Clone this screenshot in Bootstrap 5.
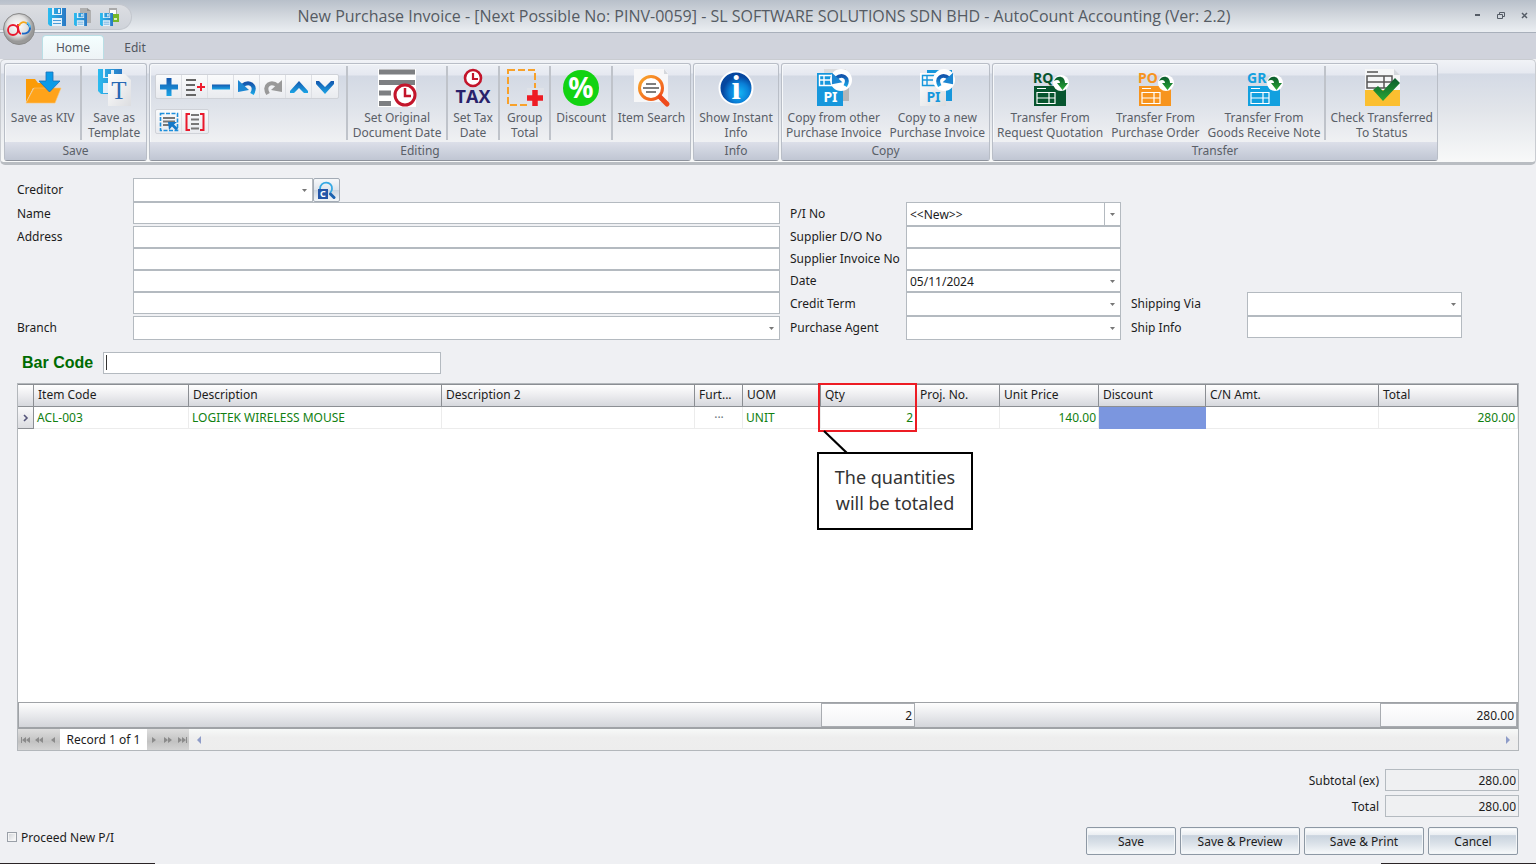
<!DOCTYPE html>
<html lang="en">
<head>
<meta charset="utf-8">
<meta name="viewport" content="width=device-width, initial-scale=1">
<title>New Purchase Invoice - AutoCount Accounting</title>
<link href="https://cdn.jsdelivr.net/npm/bootstrap@5.3.0/dist/css/bootstrap.min.css" rel="stylesheet">
<style>
  body { font-family: "Noto Sans", sans-serif; font-size: 12px; line-height: 15px; color: #1c1c1c; background: #eff0f3; }
  svg text { font-family: "Noto Sans", sans-serif; font-weight: 700; }

  /* title bar and tabs */
  .title-bar { height: 33px; background: linear-gradient(#b8c0ca, #d3d8de 50%, #ebeef2); border-bottom: 1px solid #a9b0bb; color: #555b63; }
  .title-bar h1 { font: 400 16px/20px "Open Sans", sans-serif; padding-top: 2px; }
  .orb { left: 2px; top: 12px; width: 34px; height: 34px; z-index: 3; }
  .quick-bar { width: 132px; height: 26px; background: linear-gradient(#dcdee2, #cfd3da); border: 1px solid #c3c7ce; border-left: 0; border-radius: 0 13px 13px 0; padding-left: 48px; }
  .quick-wrap, .win-buttons { flex: 1 1 0; min-width: 0; }
  .bare { background: none; border: 0; padding: 0; color: inherit; }
  .tab-strip { height: 26px; background: #d0d3dc; padding-left: 42px; color: #50565e; }
  .tab-strip a { color: #50565e; width: 62px; text-decoration: none; }
  .tab-strip a.active { background: linear-gradient(#f4ffff, #eef3f6); border: 1px solid #b9dfe6; border-bottom: 0; border-radius: 4px 4px 0 0; }

  /* ribbon */
  .ribbon { background: linear-gradient(#f1f3f7, #e6e9f0 13px, #d4dae5 14px, #e2e5ea 50%, #f8f9f9); border: 1px solid #c9ccd1; border-bottom: 3px solid #b9bdc2; border-radius: 5px; color: #5a6068; padding: 3px 3px 1px; gap: 2px; }
  .ribbon-group { border: 1px solid #b9bec7; border-bottom-color: #8e939c; border-radius: 3px; background: linear-gradient(#eef1f6, #e5e8f0 11px, #d3d9e4 12px, #dfe3ea 45%, #f0f1f3 79px); box-shadow: inset 1px 1px 0 #f6f8fa; }
  .ribbon-group .tools { height: 78px; }
  .ribbon-group h2 { font-size: 12px; line-height: 17px; height: 18px; margin: 0; text-align: center; background: linear-gradient(#dcdfe9, #c0c6d3); }
  .g-save { width: 143px; } .g-edit { width: 542px; } .g-info { width: 86px; } .g-copy { width: 209px; } .g-transfer { width: 446px; }
  .tool { flex: 1 1 auto; display: flex; flex-direction: column; align-items: center; justify-content: flex-start; padding-top: 4px; white-space: nowrap; }
  .tool svg { display: block; flex: none; width: 40px; height: 40px; margin-bottom: 2px; }
  .divided { border-left: 2px solid #bfc3ca; height: 74px; margin-top: 2px; padding-top: 2px; }
  .mini-tools { width: 196px; padding: 10px 0 0 5px; }
  .mini-group { background: linear-gradient(#fafbfc, #e9ebef); border: 1px solid #cfd2d8; border-radius: 2px; }
  .mini-group button { width: 26px; height: 23px; border-right: 1px solid #dddfe4; }
  .mini-group button:last-child { border-right: 0; }
  .mini-group svg { display: block; margin: auto; width: 20px; height: 20px; }

  /* invoice form */
  .invoice-form { padding: 13px 74px 0 17px; gap: 10px; }
  .field-row { display: flex; height: 22px; }
  .field-row.tall { height: 24px; }
  .field-row label { width: 116px; flex: none; line-height: 22px; white-space: nowrap; }
  .field-row.tall label { line-height: 24px; }
  .box { border: 1px solid #b4bac0; border-radius: 0; background-color: #fff; height: 22px; width: 100%; padding: 0 3px; min-width: 0; color: #1c1c1c; }
  .tall select.box { height: 24px; }
  select.box { appearance: none; background-image: url("data:image/svg+xml,%3Csvg xmlns='http://www.w3.org/2000/svg' width='5' height='3'%3E%3Cpath d='M0 0h5L2.500 3z' fill='%23777'/%3E%3C/svg%3E"); background-repeat: no-repeat; background-position: right 5px center; }
  select.split { background-image: url("data:image/svg+xml,%3Csvg xmlns='http://www.w3.org/2000/svg' width='5' height='3'%3E%3Cpath d='M0 0h5L2.500 3z' fill='%23777'/%3E%3C/svg%3E"), linear-gradient(#b4bac0, #b4bac0); background-position: right 5px center, right 15px top; background-size: 5px 3px, 1px 100%; }
  .side-block { width: 331px; flex: none; }
  .creditor-box { width: 180px !important; }
  .lookup { width: 27px; height: 24px; background: linear-gradient(#f6f8fa, #dfe5ec 50%, #cbd5e0 51%, #f3f6f8); border: 1px solid #a3abb5; border-radius: 2px; }
  .bar-row { padding: 12px 22px 0; }
  .bar-label { font: 700 16px/22px "Liberation Sans", sans-serif; color: #006b00; width: 81px; }
  .bar-input { width: 338px; background: linear-gradient(#333, #333) 2px 2px / 1px 15px no-repeat #fff; }

  /* item grid */
  .grid-panel { margin: 9px 17px 0; border: 1px solid #b3b7bb; background: #fff; flex: 1 1 auto; }
  .items { width: 100%; table-layout: fixed; border-collapse: separate; border-spacing: 0; }
  .items th { font-weight: 400; height: 23px; padding: 0 0 0 4px; border: solid #8b8e93; border-width: 1px 1px 1px 0; background: linear-gradient(#fff, #ececef 50%, #d6d8dd); white-space: nowrap; overflow: hidden; text-overflow: ellipsis; line-height: 20px; vertical-align: top; }
  .items tbody td { height: 22px; color: #118011; padding: 0 2px 0 3px; border-right: 1px solid #ececec; border-bottom: 1px solid #ececec; white-space: nowrap; }
  .items tbody td.row-mark { background: linear-gradient(#fafafb, #dcdde1); border-color: #8b8e93; padding: 0; }
  .items tbody td.picked { background: #7b96df; border-color: #7b96df; }
  .items.sums { border: 2px solid #9fa2a6; border-width: 1px 1px 2px; background: linear-gradient(#fdfdfd, #e9eaed 50%, #d3d5da); }
  .items.sums tbody td { height: 24px; padding: 0 2px; text-align: right; color: #1c1c1c; border: 0; }
  .items.sums tbody td.sum { border: 1px solid #a9acb1; background: linear-gradient(#fff, #f3f4f6); }
  .qty-mark { left: -3px; top: -24px; width: 99px; height: 49px; border: 2px solid #ed1c24; pointer-events: none; }
  .callout { left: -4px; top: 45px; width: 156px; height: 78px; border: 2px solid #000; background: #fff; color: #333; font-size: 18px; line-height: 26px; padding-top: 10px; text-align: center; z-index: 2; }
  .leader { left: 2px; top: 23px; width: 26px; height: 24px; }
  .record-bar { height: 21px; background: linear-gradient(#f7f9f8, #eee 40%, #ededed); }
  .nav-keys { background: linear-gradient(#dedede, #c2c2c2 60%, #d4d4d4); height: 21px; }
  .nav-keys button { width: 14px; display: flex; align-items: center; justify-content: center; }
  .record-text { width: 87px; background: #fff; height: 21px; line-height: 21px; text-align: center; }

  /* totals and commands */
  .totals { padding: 18px 17px 0; }
  .totals label { width: 92px; text-align: right; padding: 2px 6px 0 0; line-height: 20px; }
  .totals .box { width: 134px; background: #eff0f2; text-align: right; padding: 0 2px; }
  .commands { padding: 10px 18px 8px 7px; }
  .cmd { height: 28px; border: 1px solid #8d98a4; border-radius: 2px; background: linear-gradient(#fff, #e9edf1 28%, #c9d3de 29%, #dbe2e9 60%, #f8fafb); padding: 0; color: #1c1c1c; box-shadow: inset 0 0 0 1px #f2f5f7; }
  .cmd-s { width: 90px; } .cmd-l { width: 120px; }
  .proceed { padding-bottom: 8px; }
  .proceed input { appearance: none; width: 10px; height: 10px; border: 1px solid #9aa0a8; background: linear-gradient(135deg, #cfd2d6, #fff); box-shadow: inset 0 0 0 1px #f5f5f5; margin: 0 4px 0 0; }
  .edge-line i { width: 155px; height: 1px; background: #2a2426; }
</style>
</head>
<body class="min-vh-100 d-flex flex-column">

<!-- shared shapes -->
<svg class="position-absolute" width="0" height="0" aria-hidden="true">
  <defs>
    <linearGradient id="blueH"><stop offset="0" stop-color="#2bbcf0"/><stop offset="1" stop-color="#2a78c4"/></linearGradient>
    <linearGradient id="blueV" x2="0" y2="1"><stop offset="0" stop-color="#1456ad"/><stop offset="1" stop-color="#1ba5e6"/></linearGradient>
    <linearGradient id="lens" x2="1" y2="1"><stop offset="0" stop-color="#f9a72b"/><stop offset="1" stop-color="#f0501c"/></linearGradient>
    <linearGradient id="page" x2="1" y2="1"><stop offset="0" stop-color="#fff"/><stop offset="1" stop-color="#dcdde0"/></linearGradient>
    <radialGradient id="orbFill" cx=".45" cy=".4"><stop offset="0" stop-color="#fff"/><stop offset=".65" stop-color="#e0e0e0"/><stop offset="1" stop-color="#999"/></radialGradient>
    <radialGradient id="infoFill" cx=".6" cy=".65"><stop offset="0" stop-color="#13b6f5"/><stop offset=".6" stop-color="#0a80d8"/><stop offset="1" stop-color="#06479f"/></radialGradient>
    <linearGradient id="greenV" x2="0" y2="1"><stop offset="0" stop-color="#0a5a2c"/><stop offset="1" stop-color="#2aa835"/></linearGradient>
    <symbol id="disk" viewBox="0 0 18 18"><path fill="url(#blueH)" d="M0 0h18v18H2l-2-2z"/><path fill="#e4f1fa" d="M4 0h2v7H4zM13 0h1v7h-1zM4 6h10v1H4zM4 10h10v8H4z"/><path fill="#e4f1fa" d="M10 1h2v4h-2z"/><path fill="#4a9bd8" d="M5 12h8v1H5zM5 15h8v1H5z"/></symbol>
    <symbol id="transferIcon" viewBox="0 0 40 40">
      <path fill="currentColor" d="M4 18h32v20H4z"/>
      <path fill="none" stroke="#fff" stroke-width="1.200" d="M7 20.500h9M7 24.500h18v11H7zM7 30h18M19 24.500v11"/>
      <circle cx="31" cy="15" r="8" fill="#fff"/>
      <path fill="url(#greenV)" d="M24 13c2-6 11-6 11 2h3l-5.500 7-5.500-7h3c0-3-3-4-6-2z"/>
    </symbol>
    <symbol id="curlLeft" viewBox="0 0 20 20"><path fill="none" stroke="url(#blueV)" stroke-width="4" d="M5 9c7-6 15-1 10 8"/><path fill="#1c86d2" d="M1 3v12l11-2z"/></symbol>
    <symbol id="curlRight" viewBox="0 0 20 20"><path fill="none" stroke="#999" stroke-width="4" d="M15 9C8 3 0 8 5 17"/><path fill="#999" d="M19 3v12L8 13z"/></symbol>
  </defs>
</svg>

<header class="title-bar position-relative d-flex">
  <button class="bare orb position-absolute" aria-label="Application menu">
    <svg width="34" height="34" viewBox="0 0 34 34"><circle cx="17" cy="17" r="15.500" fill="url(#orbFill)" stroke="#8a8a8a"/><circle cx="11" cy="18" r="5" fill="none" stroke="#e8172c" stroke-width="1.800"/><path d="M16 12c0 5 0 9 3 10" fill="none" stroke="#e8172c" stroke-width="1.800"/><path d="M17 14c1-4 5-5 8-2.500" fill="none" stroke="#f6a81c" stroke-width="1.800"/><path d="M25 11.500c6 4 2 11-5 10" fill="none" stroke="#1b67c4" stroke-width="1.800"/><path d="M25 10.500c2 1 3 3 3 5" fill="none" stroke="#5bc3f0" stroke-width="1.600"/></svg>
  </button>
  <div class="quick-wrap">
    <div class="quick-bar d-flex align-items-center mt-1">
      <button class="bare d-flex me-2" aria-label="Save"><svg width="18" height="18"><use href="#disk"/></svg></button>
      <button class="bare d-flex me-2" aria-label="Save and new"><svg width="18" height="18" viewBox="0 0 18 18"><path fill="#b0b0b0" d="M6 0h7l4 3v12H6z"/><path fill="#939393" d="M13 0v3h4z"/><use href="#disk" y="5" width="13" height="13"/></svg></button>
      <button class="bare d-flex" aria-label="Save and print"><svg width="19" height="18" viewBox="0 0 19 18"><path fill="#aaa" d="M9 0h8v6H9z"/><path fill="#fff" d="M10 2h6v4h-6z"/><path fill="#76b82a" d="M7 6h12v8H7z"/><path fill="#d9efc0" d="M14 10h3v2h-3z"/><use href="#disk" y="5" width="13" height="13"/></svg></button>
    </div>
  </div>
  <h1 class="text-nowrap mb-0 mt-1">New Purchase Invoice - [Next Possible No: PINV-0059] - SL SOFTWARE SOLUTIONS SDN BHD - AutoCount Accounting (Ver: 2.2)</h1>
  <div class="win-buttons d-flex justify-content-end align-items-start pt-2 pe-2">
    <button class="bare d-flex mt-1 me-3" aria-label="Minimize"><svg width="7" height="7"><path d="M1 3h5" stroke="#555c66" stroke-width="2"/></svg></button>
    <button class="bare d-flex mt-1 me-3" aria-label="Restore"><svg width="8" height="7"><path d="M.5 2.500h5v4h-5zM2.500 2V.5h5v4H6" fill="none" stroke="#555c66"/></svg></button>
    <button class="bare d-flex mt-1" aria-label="Close"><svg width="7" height="7"><path d="M1 1l5 5M6 1L1 6" stroke="#555c66" stroke-width="1.500"/></svg></button>
  </div>
</header>

<nav class="tab-strip d-flex align-items-end">
  <a href="#" class="active text-center pt-1 pb-1">Home</a>
  <a href="#" class="text-center pt-1 pb-1">Edit</a>
</nav>

<section class="ribbon d-flex">
  <div class="ribbon-group g-save">
    <div class="tools d-flex">
      <button class="bare tool"><svg viewBox="0 0 40 40"><path fill="#fb9b06" d="M3 34V11h9l3 4h8v5H10z"/><path fill="#ffa31a" stroke="#ffc56b" stroke-width=".6" d="M3 35l8-15h27l-6 15z"/><path fill="#0b9be8" stroke="#1c6eb8" stroke-width=".8" d="M23 4h7v9h7L26.500 24 16 13h7z"/></svg>Save as KIV</button>
      <button class="bare tool divided"><svg viewBox="0 0 40 40"><path fill="url(#blueH)" d="M4 1h24v25H7l-3-3z"/><path fill="#e2eef8" d="M9 1h2v9H9zM9 9h12v1H9zM9 15h9v10H9zM17 2h3v5h-3z"/><path fill="url(#page)" d="M14 6h17l6 6v26H14z"/><text x="25" y="31" text-anchor="middle" fill="#2768b4" font-size="25" style="font-family:'Liberation Serif',serif;font-weight:400">T</text></svg>Save as<br>Template</button>
    </div>
    <h2 class="fw-normal">Save</h2>
  </div>

  <div class="ribbon-group g-edit">
    <div class="tools d-flex">
      <div class="mini-tools flex-shrink-0">
        <div class="mini-group d-inline-flex">
          <button class="bare" aria-label="Add"><svg viewBox="0 0 20 20"><path fill="url(#blueV)" d="M7.500 1h5v6.500H19v5h-6.500V19h-5v-6.500H1v-5h6.500z"/></svg></button>
          <button class="bare" aria-label="Insert"><svg viewBox="0 0 20 20"><path stroke="#666" stroke-width="2" d="M1 3h10M1 8h9M1 13h9M1 18h10"/><path stroke="#ee1c2e" stroke-width="2" d="M12 10h8M16 6v8"/></svg></button>
          <button class="bare" aria-label="Delete"><svg viewBox="0 0 20 20"><path fill="url(#blueV)" d="M1 7.500h18v5H1z"/></svg></button>
          <button class="bare" aria-label="Undo"><svg><use href="#curlLeft"/></svg></button>
          <button class="bare" aria-label="Redo"><svg><use href="#curlRight"/></svg></button>
          <button class="bare" aria-label="Move up"><svg viewBox="0 0 20 20"><path fill="url(#blueV)" d="M1 14l9-10 9 10v2h-4l-5-5-5 5H1z"/></svg></button>
          <button class="bare" aria-label="Move down"><svg viewBox="0 0 20 20"><path fill="url(#blueV)" d="M1 4h3l6 6 6-6h3v3l-9 10L1 7z"/></svg></button>
        </div>
        <div class="mini-group d-inline-flex mt-2">
          <button class="bare" aria-label="Select all"><svg viewBox="0 0 20 20"><path fill="none" stroke="#1d8fdc" stroke-width="1.600" stroke-dasharray="4 1.500" d="M1.500 1.500h17v17h-17z"/><path stroke="#777" stroke-width="1.800" d="M4 6h12M4 9.500h12M4 13h6"/><path fill="#1578c8" d="M9 10h9l-3 2.500 4 4-2 2-4-4L10 18z"/></svg></button>
          <button class="bare" aria-label="Range edit"><svg viewBox="0 0 20 20"><path fill="none" stroke="#e9192c" stroke-width="2" d="M5 2H1.500v16H5M15 2h3.500v16H15"/><path stroke="#777" stroke-width="1.800" d="M6 3h8M6 7.500h8M6 12h8M6 16.500h8"/></svg></button>
        </div>
      </div>
      <button class="bare tool divided"><svg viewBox="0 0 40 40"><path fill="#fff" d="M1 1h38v38H1z"/><path stroke="#7d7f82" stroke-width="5" d="M2 4h36M2 14.500h36M2 25h12M2 35.500h12"/><circle cx="28" cy="27" r="10" fill="#fff" stroke="#c3152b" stroke-width="3"/><path d="M28 20v8h6" fill="none" stroke="#c3152b" stroke-width="2.500"/></svg>Set Original<br>Document Date</button>
      <button class="bare tool divided"><svg viewBox="0 0 40 40"><circle cx="20" cy="10" r="8" fill="#fff" stroke="#c3152b" stroke-width="2.600"/><path d="M20 5v6h5" fill="none" stroke="#c3152b" stroke-width="2.200"/><text x="20" y="35" text-anchor="middle" font-size="18" fill="#29226b" style="font-family:'Open Sans',sans-serif">TAX</text></svg>Set Tax<br>Date</button>
      <button class="bare tool divided"><svg viewBox="0 0 40 40"><path fill="none" stroke="#f8a12a" stroke-width="2" stroke-dasharray="7 3" d="M3 2h27v35H3z"/><path fill="#dfe2e8" d="M22 20h17v19H22z"/><path stroke="#ee1c24" stroke-width="5.500" d="M22 30h16M30 22v16"/></svg>Group<br>Total</button>
      <button class="bare tool divided"><svg viewBox="0 0 40 40"><circle cx="20" cy="20" r="18" fill="#12d312"/><text x="20" y="30" text-anchor="middle" font-size="28" fill="#fff">%</text></svg>Discount</button>
      <button class="bare tool divided"><svg viewBox="0 0 40 40"><path fill="#f7f7f8" d="M3 1h30l4 4v29H3z"/><path fill="#d4d7dc" d="M33 1v5h4z"/><circle cx="20" cy="20" r="11.500" fill="#fff" stroke="url(#lens)" stroke-width="3"/><path stroke="#ee4a1c" stroke-width="5" stroke-linecap="round" d="M29 29l7 7"/><path stroke="#555" stroke-width="1.600" d="M15 16h10M12 20h16M15 24h10"/></svg>Item Search</button>
    </div>
    <h2 class="fw-normal">Editing</h2>
  </div>

  <div class="ribbon-group g-info">
    <div class="tools d-flex">
      <button class="bare tool"><svg viewBox="0 0 40 40"><circle cx="20" cy="20" r="16.500" fill="url(#infoFill)" stroke="#fff" stroke-width="2"/><text x="20" y="31" text-anchor="middle" font-size="33" fill="#fff" style="font-family:'Liberation Serif',serif">i</text></svg>Show Instant<br>Info</button>
    </div>
    <h2 class="fw-normal">Info</h2>
  </div>

  <div class="ribbon-group g-copy">
    <div class="tools d-flex">
      <button class="bare tool"><svg viewBox="0 0 40 40"><path fill="#dadbdd" d="M10 1h22v32H10z"/><path fill="#b5b6b9" d="M29 16h6v17h-6z"/><path fill="#1797dc" d="M3 5h26v33H3z"/><path fill="none" stroke="#fff" stroke-width="1.400" d="M5.500 7.500h14v10h-14zM5.500 12h14M10 7.500v10"/><text x="16.500" y="34" text-anchor="middle" font-size="14" fill="#fff">PI</text><circle cx="27" cy="12" r="11" fill="#fff"/><use href="#curlLeft" x="17" y="2" width="19" height="19"/></svg>Copy from other<br>Purchase Invoice</button>
      <button class="bare tool"><svg viewBox="0 0 40 40"><path fill="#1797dc" d="M10 2h25v31H10z"/><path fill="url(#page)" d="M3 5h26v33H3z"/><path fill="none" stroke="#1797dc" stroke-width="1.400" d="M5.500 7.500h14v10h-14zM5.500 12h14M10 7.500v10"/><text x="16.500" y="34" text-anchor="middle" font-size="14" fill="#1797dc">PI</text><circle cx="27" cy="12" r="11" fill="#fff"/><g transform="matrix(-1 0 0 1 54 0)"><use href="#curlLeft" x="17" y="2" width="19" height="19"/></g></svg>Copy to a new<br>Purchase Invoice</button>
    </div>
    <h2 class="fw-normal">Copy</h2>
  </div>

  <div class="ribbon-group g-transfer">
    <div class="tools d-flex">
      <button class="bare tool"><svg viewBox="0 0 40 40" color="#07552f"><text x="3" y="15" font-size="14" fill="currentColor">RQ</text><use href="#transferIcon"/></svg>Transfer From<br>Request Quotation</button>
      <button class="bare tool"><svg viewBox="0 0 40 40" color="#f7941e"><text x="3" y="15" font-size="14" fill="currentColor">PO</text><use href="#transferIcon"/></svg>Transfer From<br>Purchase Order</button>
      <button class="bare tool"><svg viewBox="0 0 40 40" color="#12a0df"><text x="3" y="15" font-size="14" fill="currentColor">GR</text><use href="#transferIcon"/></svg>Transfer From<br>Goods Receive Note</button>
      <button class="bare tool divided"><svg viewBox="0 0 40 40"><path fill="#f5f6f7" d="M3 1h29l6 6v15H3z"/><path fill="#d5d8dd" d="M32 1v6h6z"/><path stroke="#555" stroke-width="1.500" fill="none" d="M5 4h11M5 8h25v12H5zM5 14h25M22 8v12"/><path fill="#fbbf30" d="M3 22h35v16H3z"/><path fill="url(#greenV)" d="M11 22l5-4 5 5 12-13 5 5-17 18z"/></svg>Check Transferred<br>To Status</button>
    </div>
    <h2 class="fw-normal">Transfer</h2>
  </div>
</section>

<main class="d-flex flex-column flex-grow-1">
  <form class="invoice-form d-flex align-items-end">
    <div class="flex-grow-1">
      <div class="field-row tall"><label for="creditor">Creditor</label><select id="creditor" class="box creditor-box"><option></option></select><button type="button" class="lookup p-0 d-flex align-items-center justify-content-center" aria-label="Find creditor"><svg width="19" height="19" viewBox="0 0 19 19"><path fill="none" stroke="#35a9e4" stroke-width="1.800" d="M3 8c0-9 13-8 12 0 0 2-1 3-2 4"/><path stroke="#1c62b0" stroke-width="3" stroke-linecap="round" d="M13.500 13l3.500 3.500"/><path fill="#2456a8" d="M1 8h10v10H1z"/><text x="6" y="16" text-anchor="middle" font-size="9" fill="#fff">C</text></svg></button></div>
      <div class="field-row tall"><label for="name">Name</label><input id="name" class="box"></div>
      <div class="field-row"><label for="a1">Address</label><input id="a1" class="box"></div>
      <div class="field-row"><label for="a2" aria-label="Address line 2"></label><input id="a2" class="box"></div>
      <div class="field-row"><label for="a3" aria-label="Address line 3"></label><input id="a3" class="box"></div>
      <div class="field-row tall"><label for="a4" aria-label="Address line 4"></label><input id="a4" class="box"></div>
      <div class="field-row tall"><label for="branch">Branch</label><select id="branch" class="box"><option></option></select></div>
    </div>
    <div class="side-block">
      <div class="field-row tall"><label for="pino">P/I No</label><select id="pino" class="box split"><option>&lt;&lt;New&gt;&gt;</option></select></div>
      <div class="field-row"><label for="sdo">Supplier D/O No</label><input id="sdo" class="box"></div>
      <div class="field-row"><label for="sinv">Supplier Invoice No</label><input id="sinv" class="box"></div>
      <div class="field-row"><label for="date">Date</label><select id="date" class="box"><option>05/11/2024</option></select></div>
      <div class="field-row tall"><label for="term">Credit Term</label><select id="term" class="box"><option></option></select></div>
      <div class="field-row tall"><label for="agent">Purchase Agent</label><select id="agent" class="box"><option></option></select></div>
    </div>
    <div class="side-block">
      <div class="field-row tall"><label for="via">Shipping Via</label><select id="via" class="box"><option></option></select></div>
      <div class="field-row tall"><label for="info">Ship Info</label><input id="info" class="box"></div>
    </div>
  </form>

  <div class="bar-row d-flex">
    <label class="bar-label" for="barcode">Bar Code</label>
    <input id="barcode" class="box bar-input">
  </div>

  <section class="grid-panel d-flex flex-column">
    <table class="items">
      <colgroup><col style="width:16px"><col style="width:155px"><col style="width:253px"><col style="width:253px"><col style="width:48px"><col style="width:78px"><col style="width:95px"><col style="width:84px"><col style="width:99px"><col style="width:107px"><col style="width:173px"><col style="width:139px"></colgroup>
      <thead><tr><th></th><th>Item Code</th><th>Description</th><th>Description 2</th><th>Furt...</th><th>UOM</th><th>Qty</th><th>Proj. No.</th><th>Unit Price</th><th>Discount</th><th>C/N Amt.</th><th>Total</th></tr></thead>
      <tbody><tr>
        <td class="row-mark"><svg class="d-block mx-auto" width="6" height="8"><path d="M1 1l3 3-3 3" fill="none" stroke="#55557a" stroke-width="1.600"/></svg></td>
        <td>ACL-003</td><td>LOGITEK WIRELESS MOUSE</td><td></td><td class="text-center text-secondary">···</td><td>UNIT</td>
        <td class="position-relative text-end">2
          <span class="qty-mark position-absolute"></span>
          <svg class="leader position-absolute" viewBox="0 0 26 24"><path d="M1 1l24 23" stroke="#000" stroke-width="2.200"/></svg>
          <span class="callout position-absolute">The quantities<br>will be totaled</span>
        </td>
        <td></td><td class="text-end">140.00</td><td class="picked"></td><td></td><td class="text-end">280.00</td>
      </tr></tbody>
    </table>
    <table class="items sums mt-auto">
      <colgroup><col style="width:802px"><col style="width:94px"><col style="width:465px"><col style="width:137px"></colgroup>
      <tbody><tr><td></td><td class="sum">2</td><td></td><td class="sum">280.00</td></tr></tbody>
    </table>
    <div class="record-bar d-flex align-items-center">
      <div class="nav-keys d-flex">
        <button class="bare" aria-label="First"><svg width="9" height="6"><path fill="#8b8b8b" d="M0 0h1v6H0zM5 0v6L1 3zM9 0v6L5 3z"/></svg></button>
        <button class="bare" aria-label="Previous page"><svg width="8" height="6"><path fill="#8b8b8b" d="M4 0v6L0 3zM8 0v6L4 3z"/></svg></button>
        <button class="bare" aria-label="Previous"><svg width="4" height="6"><path fill="#8b8b8b" d="M4 0v6L0 3z"/></svg></button>
      </div>
      <div class="record-text">Record 1 of 1</div>
      <div class="nav-keys d-flex">
        <button class="bare" aria-label="Next"><svg width="4" height="6"><path fill="#8b8b8b" d="M0 0v6l4-3z"/></svg></button>
        <button class="bare" aria-label="Next page"><svg width="8" height="6"><path fill="#8b8b8b" d="M0 0v6l4-3zM4 0v6l4-3z"/></svg></button>
        <button class="bare" aria-label="Last"><svg width="9" height="6"><path fill="#8b8b8b" d="M0 0v6l4-3zM4 0v6l4-3zM8 0h1v6H8z"/></svg></button>
      </div>
      <button class="bare d-flex ms-2" aria-label="Scroll left"><svg width="4" height="8"><path fill="#8e9cc8" d="M4 0v8L0 4z"/></svg></button>
      <button class="bare d-flex ms-auto me-2" aria-label="Scroll right"><svg width="4" height="8"><path fill="#8e9cc8" d="M0 0v8l4-4z"/></svg></button>
    </div>
  </section>

  <div class="totals d-flex flex-column align-items-end gap-1">
    <div class="d-flex"><label for="sub">Subtotal (ex)</label><input id="sub" class="box" value="280.00" readonly></div>
    <div class="d-flex"><label for="total">Total</label><input id="total" class="box" value="280.00" readonly></div>
  </div>
  <div class="commands d-flex align-items-center">
    <div class="proceed d-flex align-items-center"><input type="checkbox" id="proceed"><label for="proceed">Proceed New P/I</label></div>
    <div class="d-flex gap-1 ms-auto">
      <button class="cmd cmd-s">Save</button>
      <button class="cmd cmd-l">Save &amp; Preview</button>
      <button class="cmd cmd-l">Save &amp; Print</button>
      <button class="cmd cmd-s">Cancel</button>
    </div>
  </div>
  <div class="edge-line d-flex justify-content-between"><i></i><i></i></div>
</main>
<script src="https://cdn.jsdelivr.net/npm/bootstrap@5.3.0/dist/js/bootstrap.bundle.min.js"></script>
</body>
</html>
